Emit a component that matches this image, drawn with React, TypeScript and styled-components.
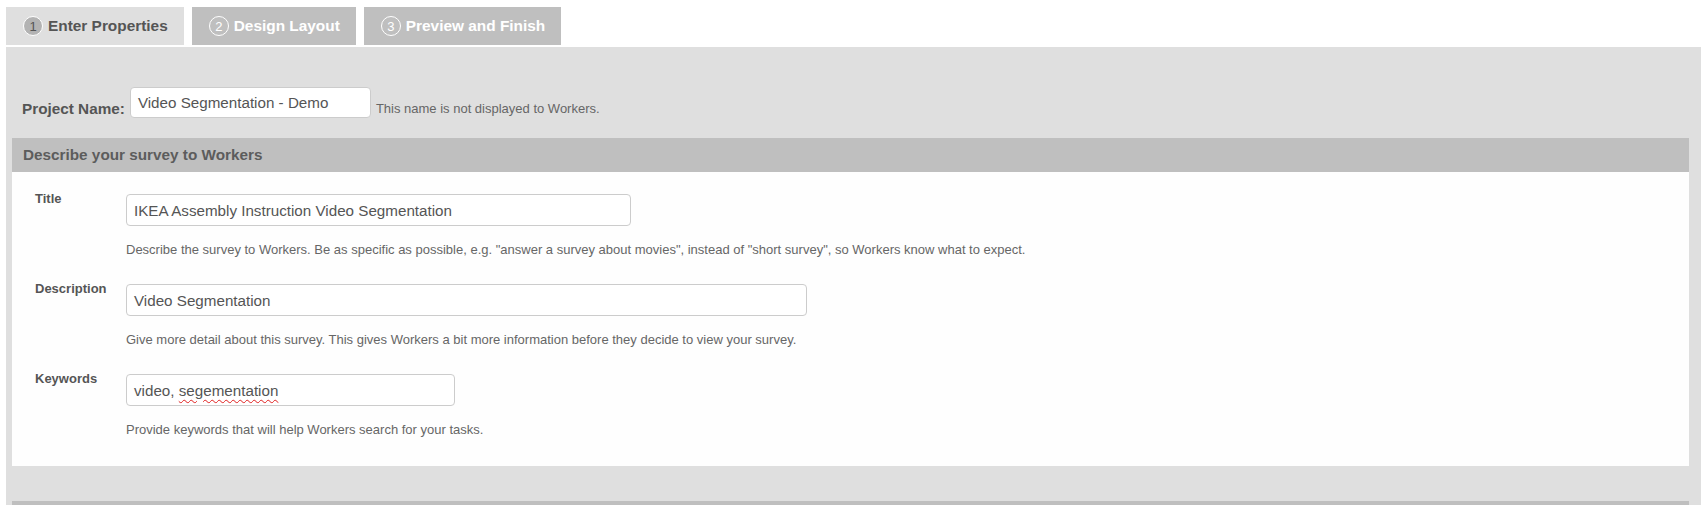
import React from "react";
import styled, { createGlobalStyle } from "styled-components";

const GlobalStyle = createGlobalStyle`
  html, body {
    margin: 0;
    background: #ffffff;
    overflow: hidden;
  }
  body {
    padding: 7px 5px 0 6px;
    font-family: "Liberation Sans", Arial, sans-serif;
    color: #555555;
  }
`;

const Page = styled.div`
  display: flex;
  flex-direction: column;
`;

const TabBar = styled.nav`
  display: flex;
  gap: 8px;
  margin-bottom: 2px;
`;

const Tab = styled.div<{ $active?: boolean }>`
  height: 38px;
  padding: 0 16px 0 17px;
  display: flex;
  align-items: center;
  gap: 5px;
  background: ${(p) => (p.$active ? "#dfdfdf" : "#bfbfbf")};
  color: ${(p) => (p.$active ? "#555555" : "#ffffff")};
  font-weight: bold;
  font-size: 15.4px;
  white-space: nowrap;
`;

const StepNum = styled.span<{ $active?: boolean }>`
  box-sizing: border-box;
  width: 20px;
  height: 20px;
  border-radius: 50%;
  border: 1.5px solid #ffffff;
  background: ${(p) => (p.$active ? "#b3b3b3" : "transparent")};
  color: ${(p) => (p.$active ? "#555555" : "#ffffff")};
  font-size: 13px;
  font-weight: normal;
  display: flex;
  align-items: center;
  justify-content: center;
`;

const Panel = styled.main`
  background: #dfdfdf;
  padding: 40px 12px 0 6px;
`;

const ProjectRow = styled.div`
  display: flex;
  align-items: flex-end;
  gap: 5px;
  padding-left: 10px;
  margin-bottom: 20px;
`;

const ProjectLabel = styled.label`
  font-weight: bold;
  font-size: 15.3px;
  line-height: 18px;
  color: #555555;
`;

const TextField = styled.div<{ $width: number; $height?: number }>`
  box-sizing: border-box;
  width: ${(p) => p.$width}px;
  height: ${(p) => p.$height ?? 32}px;
  background: #ffffff;
  border: 1px solid #cccccc;
  border-radius: 4px;
  padding: 0 7px;
  display: flex;
  align-items: center;
  font-size: 15.2px;
  color: #555555;
  white-space: pre;
`;

const FieldText = styled.span`
  white-space: pre;
`;

const Hint = styled.span`
  font-size: 13px;
  line-height: 18px;
  color: #666666;
`;

const Section = styled.section`
  margin-bottom: 35px;
`;

const SectionHeader = styled.h2`
  margin: 0;
  height: 34px;
  background: #bfbfbf;
  padding-left: 11px;
  display: flex;
  align-items: center;
  font-size: 15.3px;
  font-weight: bold;
  color: #5c5c5c;
`;

const SectionBody = styled.div`
  background: #fefefe;
  padding: 19px 0 28px 0;
  display: grid;
  grid-template-columns: 114px 1fr;
  row-gap: 23px;
`;

const FieldLabel = styled.label`
  padding-left: 23px;
  font-weight: bold;
  font-size: 13px;
  line-height: 16px;
  color: #555555;
`;

const FieldBody = styled.div`
  display: flex;
  flex-direction: column;
  align-items: flex-start;
  padding-top: 3px;
`;

const Help = styled.p`
  margin: 16px 0 0 0;
  font-size: 13px;
  line-height: 16px;
  color: #666666;
`;

const Misspelled = styled.span`
  text-decoration: underline wavy #e02020;
  text-decoration-thickness: 1px;
  text-underline-offset: 3px;
`;

const fields = [
  {
    label: "Title",
    width: 505,
    value: <FieldText>IKEA Assembly Instruction Video Segmentation</FieldText>,
    help: 'Describe the survey to Workers. Be as specific as possible, e.g. "answer a survey about movies", instead of "short survey", so Workers know what to expect.',
  },
  {
    label: "Description",
    width: 681,
    value: <FieldText>Video Segmentation</FieldText>,
    help: "Give more detail about this survey. This gives Workers a bit more information before they decide to view your survey.",
  },
  {
    label: "Keywords",
    width: 329,
    value: (
      <FieldText>
        {"video, "}
        <Misspelled>segementation</Misspelled>
      </FieldText>
    ),
    help: "Provide keywords that will help Workers search for your tasks.",
  },
];

export default function App() {
  return (
    <>
      <GlobalStyle />
      <Page>
        <TabBar>
          <Tab $active>
            <StepNum $active>1</StepNum>Enter Properties
          </Tab>
          <Tab>
            <StepNum>2</StepNum>Design Layout
          </Tab>
          <Tab>
            <StepNum>3</StepNum>Preview and Finish
          </Tab>
        </TabBar>
        <Panel>
          <ProjectRow>
            <ProjectLabel>Project Name:</ProjectLabel>
            <TextField role="textbox" $width={241} $height={31}>
              <FieldText>Video Segmentation - Demo</FieldText>
            </TextField>
            <Hint>This name is not displayed to Workers.</Hint>
          </ProjectRow>
          <Section>
            <SectionHeader>Describe your survey to Workers</SectionHeader>
            <SectionBody>
              {fields.map((f) => (
                <React.Fragment key={f.label}>
                  <FieldLabel>{f.label}</FieldLabel>
                  <FieldBody>
                    <TextField role="textbox" $width={f.width}>
                      {f.value}
                    </TextField>
                    <Help>{f.help}</Help>
                  </FieldBody>
                </React.Fragment>
              ))}
            </SectionBody>
          </Section>
          <Section>
            <SectionHeader aria-hidden="true" />
          </Section>
        </Panel>
      </Page>
    </>
  );
}
